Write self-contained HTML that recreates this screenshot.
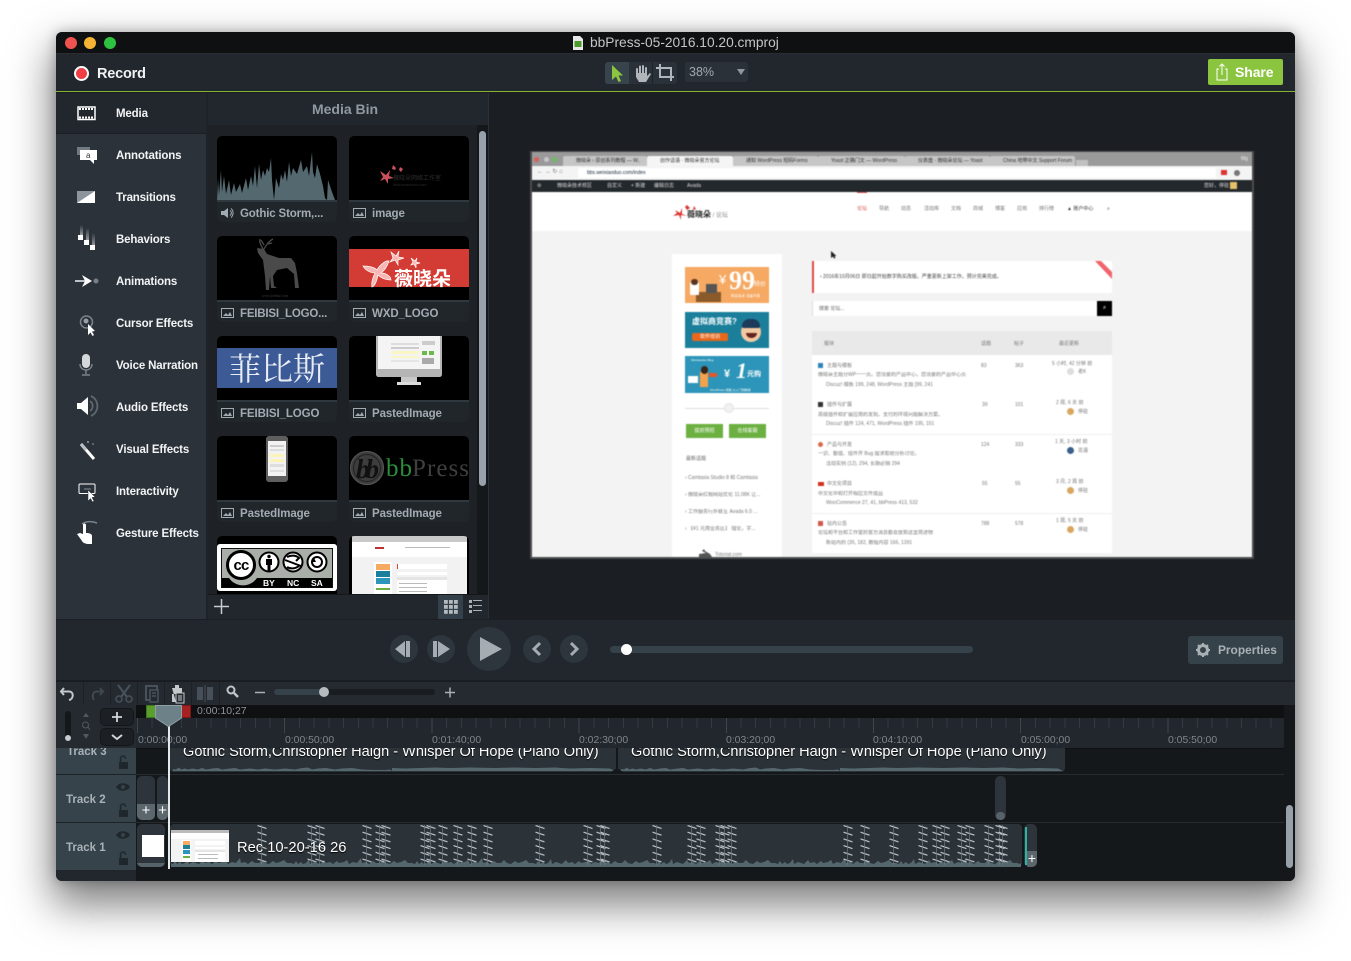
<!DOCTYPE html>
<html lang="en"><head><meta charset="utf-8"><title>bbPress-05-2016.10.20.cmproj</title>
<style>
html,body{margin:0;padding:0;background:#fff;width:1351px;height:961px;overflow:hidden}
body{position:relative;font-family:"Liberation Sans","Noto Sans CJK SC",sans-serif}
.a,.a *{box-sizing:border-box}
.a{position:absolute;white-space:nowrap}
#shadow{left:56px;top:32px;width:1239px;height:849px;border-radius:6px;box-shadow:0 20px 42px 4px rgba(0,0,0,.5),0 0 12px rgba(0,0,0,.25)}
#win{left:0;top:0;width:1351px;height:961px;clip-path:inset(32px 56px 80px 56px round 6px);background:#1b1f24}
.nav{left:116px;color:#f2f4f5;font-size:11.5px;font-weight:bold;line-height:14px;letter-spacing:-.15px}
.card{width:120px;height:86px;background:#21262b;border-radius:5px;overflow:hidden}
.thumb{left:0;top:0;width:120px;height:64px;background:#000}
.strip{left:0;top:64px;width:120px;height:2px;background:#2f383e}
.lab{left:23px;top:71px;color:#a3abb2;font-size:11.5px;font-weight:bold;line-height:14px;letter-spacing:-.1px}
.ico{left:4px;top:71px}
.circ{border-radius:50%;background:#2e363d}
.rl{top:734px;color:#7f858a;font-size:10.4px;line-height:13px}
.tr{left:66px;color:#a9b2b7;font-size:11.5px;font-weight:bold;line-height:14px}
.ln{background:#1d2226}
.clip{background:#2b3238;overflow:hidden}
.cap{color:#fff;font-size:14.55px;line-height:17px;text-shadow:0 1px 1px #000}
/* tiny preview */
#pv{left:530px;top:151px;width:724px;height:408px;overflow:hidden;background:#f3f3f3;filter:blur(.4px);border:2px solid #4b4b4b;border-top-width:1px}
.t{position:absolute;white-space:nowrap;font-size:5px;line-height:6px;color:#777}
.b{position:absolute}
.tab{position:absolute;top:4px;height:11px;background:#c6c6c6;border-radius:2px 2px 0 0;font-size:5px;line-height:11px;color:#333;padding-left:13px;overflow:hidden;white-space:nowrap}
</style></head><body>
<div class="a" id="shadow"></div>
<div class="a" id="win">

<!-- title bar -->
<div class="a" style="left:56px;top:32px;width:1239px;height:22px;background:#0f1012;border-bottom:1px solid #2a2e33"></div>
<div class="a" style="left:65px;top:37px;width:12px;height:12px;border-radius:50%;background:#f0524f"></div>
<div class="a" style="left:84px;top:37px;width:12px;height:12px;border-radius:50%;background:#f5b433"></div>
<div class="a" style="left:104px;top:37px;width:12px;height:12px;border-radius:50%;background:#2dc23f"></div>
<svg class="a" style="left:572px;top:36px" width="12" height="14"><path d="M1 0H8L11 3V14H1Z" fill="#e8e8e8"/><rect x="2.5" y="5" width="7" height="6" fill="#4c9c2c"/></svg>
<div class="a" style="left:590px;top:35px;color:#c3c5c7;font-size:13.75px;line-height:16px">bbPress-05-2016.10.20.cmproj</div>

<!-- top toolbar -->
<div class="a" style="left:56px;top:54px;width:1239px;height:37px;background:#22272e"></div>
<div class="a" style="left:56px;top:91px;width:1239px;height:1px;background:#84b431"></div>
<div class="a" style="left:74px;top:66px;width:15px;height:15px;border-radius:50%;background:#ef3e46;border:2px solid #fff"></div>
<div class="a" style="left:97px;top:65px;color:#f0f2f3;font-size:14.5px;font-weight:bold;line-height:18px;letter-spacing:-.2px">Record</div>
<div class="a" style="left:605px;top:62px;width:72px;height:22px;background:#2a3138;border-radius:3px"></div>
<div class="a" style="left:605px;top:62px;width:24px;height:22px;background:#37444b;border-radius:3px 0 0 3px"></div>
<div class="a" style="left:652px;top:62px;width:1px;height:22px;background:#1e2328"></div>
<svg class="a" style="left:605px;top:62px" width="72" height="22">
<path d="M7 3V18L11 14.5 13.5 20 16 19 13.5 13.5H18Z" fill="#8cc63f"/>
<path d="M32 13V7M35 12V4.500M38 12V4M41 13V6" stroke="#b0b6ba" stroke-width="2" stroke-linecap="round" fill="none"/>
<path d="M31 11H42V14L45 11 46 12 41 20H34L31 15Z" fill="#b0b6ba"/>
<path d="M51 6H66V19M55 2V15H69" stroke="#b0b6ba" stroke-width="2" fill="none"/>
</svg>
<div class="a" style="left:685px;top:62px;width:63px;height:20px;background:#2a3138;border-radius:3px"></div>
<div class="a" style="left:689px;top:65px;color:#a3aaaf;font-size:12.5px;line-height:14px">38%</div>
<svg class="a" style="left:737px;top:69px" width="8" height="6"><path d="M0 0H8L4 6Z" fill="#8f979c"/></svg>
<div class="a" style="left:1208px;top:59px;width:75px;height:26px;background:#8bc53f;border-radius:2px"></div>
<svg class="a" style="left:1214px;top:62px" width="16" height="20"><path d="M5 7H3V18H13V7H11" fill="none" stroke="#fff" stroke-width="1"/><path d="M8 13V2M5.5 4.5L8 2 10.500 4.500" fill="none" stroke="#fff" stroke-width="1"/></svg>
<div class="a" style="left:1235px;top:63px;color:#fff;font-size:14px;font-weight:bold;line-height:18px;letter-spacing:-.1px">Share</div>

<!-- sidebar -->
<div class="a" style="left:56px;top:93px;width:150px;height:526px;background:#2b3239"></div>
<div class="a" style="left:56px;top:93px;width:150px;height:41px;background:#22272e;border-bottom:1px solid #1b1f24"></div>
<div class="a" style="left:206px;top:93px;width:2px;height:526px;background:#1f2328"></div>
<div class="a nav" style="top:107px">Media</div>
<div class="a nav" style="top:149px">Annotations</div>
<div class="a nav" style="top:191px">Transitions</div>
<div class="a nav" style="top:233px">Behaviors</div>
<div class="a nav" style="top:275px">Animations</div>
<div class="a nav" style="top:317px">Cursor Effects</div>
<div class="a nav" style="top:359px">Voice Narration</div>
<div class="a nav" style="top:401px">Audio Effects</div>
<div class="a nav" style="top:443px">Visual Effects</div>
<div class="a nav" style="top:485px">Interactivity</div>
<div class="a nav" style="top:527px">Gesture Effects</div>
<svg class="a" style="left:56px;top:93px" width="150" height="460" fill="#fff">
<defs><linearGradient id="st" x1="0" y1="0" x2="0" y2="1"><stop offset="0" stop-color="#fff" stop-opacity="0"/><stop offset="1" stop-color="#fff" stop-opacity=".5"/></linearGradient></defs>
<!-- media -->
<rect x="22" y="14" width="17" height="12.500" fill="none" stroke="#fff" stroke-width="1.500"/>
<path d="M23 16H38M23 24.500H38" stroke="#fff" stroke-width="2" stroke-dasharray="2 1"/>
<!-- annotations -->
<rect x="21" y="54" width="13" height="8" fill="#6f7a82"/>
<path d="M24 57H41V67H38V71L34 67H24Z"/><text x="30" y="65" font-size="8" fill="#333" font-family="Liberation Sans">a</text>
<!-- transitions -->
<rect x="21" y="98" width="18" height="12" fill="#8c959b"/><path d="M39 98V110H21Z"/>
<!-- behaviors -->
<rect x="24" y="132" width="3" height="10" fill="url(#st)"/><rect x="30" y="135" width="3" height="12" fill="url(#st)"/><rect x="36" y="140" width="3" height="13" fill="url(#st)"/>
<rect x="22" y="142" width="5" height="5"/><rect x="28" y="147" width="5" height="5"/><rect x="34" y="152" width="5" height="5"/>
<!-- animations -->
<path d="M19 188H29" stroke="#fff" stroke-opacity=".7" stroke-width="2"/><path d="M26 182L36 188 26 194 29 188Z"/><circle cx="40" cy="188" r="2.500" fill="#778189"/>
<!-- cursor -->
<circle cx="30.500" cy="229" r="6" fill="none" stroke="#7b858c" stroke-width="1.500"/><circle cx="30" cy="228" r="2.500" fill="#98a0a6"/><path d="M32 231V242L34.500 239.500 36.500 243 38 242 36 238.500 39 238Z"/>
<!-- voice -->
<rect x="26" y="261" width="8" height="14" rx="4" fill="#d5d8da"/><path d="M24 271C24 279 36 279 36 271M30 277V281M26 282H34" fill="none" stroke="#78838a" stroke-width="1.500"/>
<!-- audio -->
<path d="M21 310H25L32 304V322L25 316H21Z" transform="translate(0,0)"/><path d="M34 308A6 6 0 0 1 34 318M35 303A11 11 0 0 1 35 323" fill="none" stroke="#5d686f" stroke-width="1.800"/>
<!-- visual -->
<path d="M25 351L38 366" stroke="#fff" stroke-width="3"/><path d="M25 351L30 357" stroke="#b9bfc3" stroke-width="3"/><circle cx="32" cy="349" r="1" fill="#9aa2a7"/><circle cx="37" cy="351" r=".8" fill="#9aa2a7"/>
<!-- interactivity -->
<rect x="23" y="391" width="16" height="9.500" rx="1" fill="none" stroke="#fff" stroke-width="1"/><path d="M28 396H35" stroke="#8a9399" stroke-width="1"/><path d="M32 397V408L34.500 405.500 36.500 409 38 408 36 404.500 39 404Z" stroke="#2b3239" stroke-width=".5"/>
<!-- gesture -->
<path d="M26 431C30 428 36 428 41 430" fill="none" stroke="#7a848b" stroke-width="1.500"/><path d="M27 432V441L24 440 21 441 26 448C27 450 30 451 33 451H36V443C36 440 31 440 30 440V432C30 430 27 430 27 432Z"/>
</svg>

<!-- media bin -->
<div class="a" style="left:208px;top:93px;width:280px;height:502px;background:#1e2227"></div>
<div class="a" style="left:208px;top:93px;width:280px;height:32px;background:#22272e"></div>
<div class="a" style="left:488px;top:93px;width:1px;height:526px;background:#2b3138"></div>
<div class="a" style="left:208px;top:100px;width:274px;text-align:center;color:#8f999f;font-size:14px;font-weight:bold;line-height:18px">Media Bin</div>
<div class="a" style="left:477px;top:125px;width:11px;height:470px;background:#15181b"></div>
<div class="a" style="left:479px;top:131px;width:7px;height:355px;background:#98a1a9;border-radius:4px"></div>

<!-- card 1 -->
<div class="a card" style="left:217px;top:136px"><div class="a thumb"><svg width="120" height="64"><path d="M0 64L1 42 2 59 4 34 5 56 7 40 9 58 12 44 14 59 17 47 19 56 23 48 25 57 29 42 31 54 34 40 36 50 38 30 40 52 42 28 44 44 46 34 48 40 50 32 52 36 54 22 55 44 57 64 59 42 62 52 64 38 66 44 68 34 70 46 72 26 74 40 76 32 80 38 84 24 86 36 90 30 92 40 95 16 96 36 98 42 100 28 103 38 106 50 108 62 110 64 111 44 115 56 118 64Z" fill="#54686f"/></svg></div><div class="a strip"></div>
<svg class="a ico" width="14" height="12" style="top:71px"><path d="M0 4H3L7 1V11L3 8H0Z" fill="#a3abb2"/><path d="M9 3.500A3 3 0 0 1 9 8.500M10 1.500A6 6 0 0 1 10 10.500" stroke="#a3abb2" fill="none"/></svg>
<div class="a lab" style="letter-spacing:-.15px">Gothic Storm,...</div></div>

<!-- card 2 -->
<div class="a card" style="left:349px;top:136px"><div class="a thumb"><svg width="120" height="64"><g fill="#c9515c"><path d="M31 35L37 39 41 34 40 40 45 42 39 43 39 48 36 43 31 45 34 41Z"/><path d="M44 29L47 32 46 34 43 33Z"/><path d="M51 31L54 33 52 36 50 34Z"/></g><text x="44" y="44" font-size="6" fill="#2e2e2e" font-family="Noto Sans CJK SC">薇晓朵网络工作室</text><text x="44" y="50" font-size="3.500" fill="#2a2a2a" font-family="Liberation Sans">www.weixiaoduo.com</text></svg></div><div class="a strip"></div>
<svg class="a ico" width="13" height="10" style="top:72px"><rect x=".5" y=".5" width="12" height="9" fill="none" stroke="#a3abb2"/><path d="M2 8L5 5 7 7 9 4 11 8Z" fill="#a3abb2"/></svg>
<div class="a lab">image</div></div>

<!-- card 3 -->
<div class="a card" style="left:217px;top:236px"><div class="a thumb"><svg width="120" height="64"><path d="M40 12L47 13 50 18 62 22 74 22 78 27 80 37 82 52 78 52 77 38 70 32 60 34 56 40 57 50 60 52 54 52 53 40 52 54 49 54 48 40 46 24 41 17Z" fill="#4a4a4a"/><path d="M46 13C44 9 42 6 43 3M47 13C50 8 52 5 56 3M47 9L44 4M50 8L55 7" stroke="#4a4a4a" stroke-width="1.300" fill="none"/><text x="45" y="61" font-size="4" font-style="italic" fill="#3d3d3d" font-family="Liberation Serif">www.feibisi.com</text></svg></div><div class="a strip"></div>
<svg class="a ico" width="13" height="10" style="top:72px"><rect x=".5" y=".5" width="12" height="9" fill="none" stroke="#a3abb2"/><path d="M2 8L5 5 7 7 9 4 11 8Z" fill="#a3abb2"/></svg>
<div class="a lab" style="letter-spacing:-.2px">FEIBISI_LOGO...</div></div>

<!-- card 4 -->
<div class="a card" style="left:349px;top:236px"><div class="a thumb"><div class="a" style="left:0;top:13px;width:120px;height:38px;background:#d33c34"></div><svg class="a" style="left:0;top:0" width="120" height="64"><g fill="#f8b7b4" stroke="#fff" stroke-width=".7"><path d="M14 30C22 30 26 32 28 34 30 30 36 24 40 25 38 31 35 35 32 37 38 37 42 41 42 44 36 44 32 42 29 39 28 44 26 50 23 51 22 46 24 41 26 37 21 37 16 34 14 30Z"/><path d="M42 16L47 20 50 15 49 21 55 22 49 24 49 29 46 24 41 26 44 22Z"/><path d="M62 22L66 25 68 22 67 26 71 27 67 28 67 32 65 28 62 29 64 26Z"/></g><text x="45" y="49" font-size="19" font-weight="bold" fill="#fff" font-family="Noto Sans CJK SC">薇晓朵</text></svg></div><div class="a strip"></div>
<svg class="a ico" width="13" height="10" style="top:72px"><rect x=".5" y=".5" width="12" height="9" fill="none" stroke="#a3abb2"/><path d="M2 8L5 5 7 7 9 4 11 8Z" fill="#a3abb2"/></svg>
<div class="a lab">WXD_LOGO</div></div>

<!-- card 5 -->
<div class="a card" style="left:217px;top:336px"><div class="a thumb"><div class="a" style="left:0;top:12px;width:120px;height:40px;background:#3c5a96;color:#e8ecf4;font:32px/39px 'Noto Serif CJK SC',serif;text-align:center">菲比斯</div></div><div class="a strip"></div>
<svg class="a ico" width="13" height="10" style="top:72px"><rect x=".5" y=".5" width="12" height="9" fill="none" stroke="#a3abb2"/><path d="M2 8L5 5 7 7 9 4 11 8Z" fill="#a3abb2"/></svg>
<div class="a lab">FEIBISI_LOGO</div></div>

<!-- card 6 -->
<div class="a card" style="left:349px;top:336px"><div class="a thumb"><svg width="120" height="64"><path d="M27 0H93V38C93 40 92 41 90 41H30C28 41 27 40 27 38Z" fill="#b5b5b5"/><rect x="29" y="0" width="62" height="33" fill="#f4f4f4"/><rect x="42" y="7" width="28" height="2" fill="#ddd"/><rect x="42" y="11" width="28" height="2" fill="#ccc"/><rect x="42" y="15" width="28" height="3" fill="#fbf6c6"/><rect x="42" y="20" width="28" height="2" fill="#fbf6c6"/><rect x="42" y="24" width="28" height="2" fill="#e5e5e5"/><rect x="73" y="5" width="13" height="4" fill="#ccc"/><rect x="73" y="15" width="5" height="4" fill="#6cb84a"/><rect x="80" y="15" width="5" height="4" fill="#6cb84a"/><rect x="73" y="22" width="12" height="6" fill="#aaa"/><rect x="52" y="41" width="16" height="6" fill="#c9c9c9"/><rect x="48" y="46" width="24" height="3" fill="#dcdcdc"/></svg></div><div class="a strip"></div>
<svg class="a ico" width="13" height="10" style="top:72px"><rect x=".5" y=".5" width="12" height="9" fill="none" stroke="#a3abb2"/><path d="M2 8L5 5 7 7 9 4 11 8Z" fill="#a3abb2"/></svg>
<div class="a lab">PastedImage</div></div>

<!-- card 7 -->
<div class="a card" style="left:217px;top:436px"><div class="a thumb"><svg width="120" height="64"><rect x="49" y="0" width="22" height="46" rx="3" fill="#5e5e5e"/><rect x="51" y="5" width="18" height="35" fill="#f2f2f2"/><rect x="53" y="9" width="14" height="2" fill="#ccc"/><rect x="53" y="13" width="14" height="2" fill="#ddd"/><rect x="53" y="18" width="14" height="3" fill="#fbf3b8"/><rect x="53" y="23" width="14" height="3" fill="#fbf3b8"/><rect x="53" y="28" width="14" height="3" fill="#ddd"/><rect x="53" y="34" width="14" height="2" fill="#ddd"/></svg></div><div class="a strip"></div>
<svg class="a ico" width="13" height="10" style="top:72px"><rect x=".5" y=".5" width="12" height="9" fill="none" stroke="#a3abb2"/><path d="M2 8L5 5 7 7 9 4 11 8Z" fill="#a3abb2"/></svg>
<div class="a lab">PastedImage</div></div>

<!-- card 8 -->
<div class="a card" style="left:349px;top:436px"><div class="a thumb"><svg width="120" height="64"><circle cx="18" cy="32" r="16.500" fill="#3d3d3d" stroke="#525252" stroke-width="1.200"/><circle cx="18" cy="32" r="13.500" fill="none" stroke="#222"/><text x="7" y="42" font-size="27" font-style="italic" font-weight="bold" fill="#111" font-family="Liberation Serif" textLength="23">bb</text><text x="37" y="40" font-size="25" fill="#2b8f3a" font-family="Liberation Serif" textLength="26">bb</text><text x="63" y="40" font-size="25" fill="#3f3f3f" font-family="Liberation Serif" textLength="57">Press</text></svg></div><div class="a strip"></div>
<svg class="a ico" width="13" height="10" style="top:72px"><rect x=".5" y=".5" width="12" height="9" fill="none" stroke="#a3abb2"/><path d="M2 8L5 5 7 7 9 4 11 8Z" fill="#a3abb2"/></svg>
<div class="a lab">PastedImage</div></div>

<!-- card 9 -->
<div class="a" style="left:217px;top:536px;width:120px;height:59px;background:#000;border-radius:5px 5px 0 0;overflow:hidden">
<svg width="120" height="59"><rect x="0" y="8" width="120" height="47" rx="3" fill="#fff"/><rect x="4.500" y="12.500" width="111" height="39" fill="#a9aea8" stroke="#111" stroke-width="1"/><rect x="5" y="42" width="110" height="9.500" fill="#000"/><path d="M5 42H40A17 17 0 0 1 12 42Z" fill="#a9aea8"/>
<circle cx="24" cy="29" r="13.500" fill="#fff" stroke="#000" stroke-width="3"/><text x="24" y="34" text-anchor="middle" font-size="15" font-weight="bold" fill="#000" font-family="Liberation Sans" letter-spacing="-.8">cc</text>
<g fill="#fff" stroke="#000" stroke-width="2"><circle cx="52" cy="26" r="9.500"/><circle cx="76" cy="26" r="9.500"/><circle cx="100" cy="26" r="9.500"/></g>
<circle cx="52" cy="20.500" r="1.700" fill="#000"/><path d="M49 23H55V29H53.500V35H50.500V29H49Z" fill="#000"/>
<path d="M70 21C74 19 79 19 82 22L79 25M70 31C73 33 78 33 82 30M68 24L84 30" stroke="#000" stroke-width="2" fill="none"/>
<circle cx="100" cy="26" r="5" fill="none" stroke="#000" stroke-width="2"/><path d="M94 26L97 22 99 26Z" fill="#000"/>
<text x="46" y="50" font-size="8.500" font-weight="bold" fill="#fff" font-family="Liberation Sans">BY</text><text x="70" y="50" font-size="8.500" font-weight="bold" fill="#fff" font-family="Liberation Sans">NC</text><text x="94" y="50" font-size="8.500" font-weight="bold" fill="#fff" font-family="Liberation Sans">SA</text></svg></div>

<!-- card 10 -->
<div class="a" style="left:349px;top:536px;width:120px;height:59px;background:#000;border-radius:5px 5px 0 0;overflow:hidden">
<div class="a" style="left:3px;top:0;width:115px;height:6px;background:#c9c9c9"></div>
<div class="a" style="left:3px;top:6px;width:115px;height:15px;background:#fff"></div>
<div class="a" style="left:3px;top:21px;width:115px;height:38px;background:#f2f2f2"></div>
<div class="a" style="left:26px;top:11px;width:9px;height:2px;background:#b33"></div>
<div class="a" style="left:56px;top:11px;width:45px;height:1px;background:#bbb"></div>
<div class="a" style="left:25px;top:26px;width:18px;height:33px;background:#fff"></div>
<div class="a" style="left:27px;top:28px;width:14px;height:6px;background:#f5a962"></div>
<div class="a" style="left:27px;top:35px;width:14px;height:6px;background:#1b7f9b"></div>
<div class="a" style="left:27px;top:42px;width:14px;height:6px;background:#2d95b9"></div>
<div class="a" style="left:27px;top:52px;width:14px;height:2px;background:#6cb042"></div>
<div class="a" style="left:48px;top:28px;width:50px;height:5px;background:#fff;border-left:1px solid #d44"></div>
<div class="a" style="left:48px;top:36px;width:50px;height:3px;background:#fff"></div>
<div class="a" style="left:48px;top:41px;width:50px;height:3px;background:#e5e5e5"></div>
<div class="a" style="left:48px;top:44px;width:50px;height:15px;background:#fff"></div>
<div class="a" style="left:50px;top:47px;width:28px;height:1px;background:#bbb"></div>
<div class="a" style="left:50px;top:51px;width:28px;height:1px;background:#bbb"></div>
<div class="a" style="left:50px;top:55px;width:28px;height:1px;background:#bbb"></div>
</div>

<!-- bin footer -->
<div class="a" style="left:208px;top:594px;width:280px;height:25px;background:#22272e;border-top:1px solid #15181b"></div>
<svg class="a" style="left:214px;top:599px" width="15" height="15"><path d="M7.500 0V15M0 7.500H15" stroke="#c7cbce" stroke-width="1.500"/></svg>
<div class="a" style="left:438px;top:595px;width:25px;height:24px;background:#35414a"></div>
<svg class="a" style="left:444px;top:600px" width="14" height="14" fill="#b3b9bd"><rect width="3.800" height="3.800"/><rect x="5" width="3.800" height="3.800"/><rect x="10" width="3.800" height="3.800"/><rect y="5" width="3.800" height="3.800"/><rect x="5" y="5" width="3.800" height="3.800"/><rect x="10" y="5" width="3.800" height="3.800"/><rect y="10" width="3.800" height="3.800"/><rect x="5" y="10" width="3.800" height="3.800"/><rect x="10" y="10" width="3.800" height="3.800"/></svg>
<svg class="a" style="left:469px;top:599px" width="14" height="15" fill="#a8aeb3"><rect y="1" width="3" height="3"/><rect x="4" y="1" width="9" height="1"/><rect y="6" width="3" height="3"/><rect x="4" y="6" width="9" height="1"/><rect y="11" width="3" height="3"/><rect x="4" y="11" width="9" height="1"/></svg>

<!-- canvas -->
<div class="a" style="left:489px;top:93px;width:806px;height:526px;background:#1b1f24"></div>
<div class="a" id="pv">
  <div class="b" style="left:0;top:0;width:720px;height:14px;background:#9a9a9a"></div>
  <div class="b" style="left:2px;top:5px;width:5px;height:5px;border-radius:50%;background:#d9605a"></div>
  <div class="b" style="left:12px;top:5px;width:5px;height:5px;border-radius:50%;background:#c7c7c7"></div>
  <div class="b" style="left:20px;top:5px;width:5px;height:5px;border-radius:50%;background:#6bbd5f"></div>
  <div class="tab" style="left:31px;width:84px">微晓朵 › 原创系列教程 — W..</div>
  <div class="tab" style="left:115px;width:86px;background:#f5f5f5">创作话语 · 微晓朵官方论坛</div>
  <div class="tab" style="left:201px;width:85px">通知 WordPress 短码Forms</div>
  <div class="tab" style="left:286px;width:87px">Yoast 正确门文 — WordPress</div>
  <div class="tab" style="left:373px;width:85px">仪表盘 · 微晓朵论坛 — Yoast</div>
  <div class="tab" style="left:458px;width:85px">China 地带中文 Support Forum</div>
  <div class="b" style="left:544px;top:8px;width:12px;height:6px;background:#c0c0c0"></div>
  <div class="t" style="left:709px;top:4px;color:#eee">Mg</div>
  <div class="b" style="left:0;top:14px;width:720px;height:14px;background:#f4f4f4"></div>
  <div class="b" style="left:46px;top:16px;width:638px;height:10px;background:#fff"></div>
  <div class="t" style="left:55px;top:18px;color:#123">bbs.weixiaoduo.com/index</div>
  <div class="t" style="left:5px;top:17px;color:#777;font-size:6px">← → ↻ ⌂</div>
  <div class="b" style="left:689px;top:18px;width:6px;height:5px;background:#d33"></div>
  <div class="b" style="left:702px;top:18px;width:6px;height:6px;border-radius:50%;background:#777"></div>
  <div class="b" style="left:0;top:28px;width:720px;height:12px;background:#23282d"></div>
  <div class="t" style="left:5px;top:31px;color:#ccc">⚙</div>
  <div class="t" style="left:25px;top:31px;color:#ddd">微晓朵技术校区</div>
  <div class="t" style="left:75px;top:31px;color:#ddd">自定义</div>
  <div class="t" style="left:99px;top:31px;color:#ddd">+ 新建</div>
  <div class="t" style="left:122px;top:31px;color:#ddd">编辑日志</div>
  <div class="t" style="left:155px;top:31px;color:#ddd">Avada</div>
  <div class="t" style="left:672px;top:31px;color:#ddd">您好，停驻</div>
  <div class="b" style="left:698px;top:30px;width:7px;height:7px;background:#e8c16a"></div>
  <div class="b" style="left:0;top:40px;width:720px;height:39px;background:#fff"></div>
  <svg class="b" style="left:140px;top:50px" width="60" height="20"><path d="M3 8L8 11 10 6 10 12 15 14 9 13 9 18 7 13 1 14 5 11Z" fill="#d33"/><path d="M15 3L18 6 15 8 13 5Z M22 4L24 7 21 8Z" fill="#d33"/></svg>
  <div class="t" style="left:155px;top:58px;color:#222;font-size:8px;line-height:10px;font-weight:bold">薇晓朵<span style="color:#888;font-size:6px;font-weight:normal"> / 论坛</span></div>
  <div class="t" style="left:325px;top:54px;color:#d9534f">论坛</div>
  <div class="b" style="left:325px;top:40px;width:10px;height:1px;background:#d9534f"></div>
  <div class="t" style="left:347px;top:54px">导航</div>
  <div class="t" style="left:369px;top:54px">动态</div>
  <div class="t" style="left:392px;top:54px">活动库</div>
  <div class="t" style="left:419px;top:54px">文档</div>
  <div class="t" style="left:441px;top:54px">商城</div>
  <div class="t" style="left:463px;top:54px">博客</div>
  <div class="t" style="left:485px;top:54px">应用</div>
  <div class="t" style="left:507px;top:54px">排行榜</div>
  <div class="t" style="left:535px;top:54px;color:#333">▲ 账户中心</div>
  <div class="t" style="left:575px;top:54px;color:#444">⌕</div>
  <svg class="b" style="left:299px;top:99px" width="6" height="8"><path d="M0 0V7L2 5.500 3 7.500 4.500 7 3.500 5H5.500Z" fill="#222"/></svg>
  <div class="b" style="left:140px;top:102px;width:110px;height:303px;background:#fff"></div>
  <div class="b" style="left:153px;top:115px;width:84px;height:36px;background:#f5a962;overflow:hidden">
    <span class="t" style="left:34px;top:6px;color:#fff;font-size:13px;line-height:14px">¥</span>
    <span class="t" style="left:44px;top:0;color:#fff;font:bold 26px/28px 'Liberation Serif',serif">99</span>
    <span class="t" style="left:69px;top:15px;color:#fff;font-size:6px">特价</span>
    <span class="t" style="left:46px;top:27px;color:#fff;font-size:3.500px;line-height:4px">购买技术 流量不限</span>
    <div class="b" style="left:11px;top:25px;width:25px;height:10px;background:#8a5a2b"></div>
    <div class="b" style="left:21px;top:17px;width:11px;height:9px;background:#555"></div>
    <div class="b" style="left:5px;top:13px;width:9px;height:15px;border-radius:4px 4px 0 0;background:#fff"></div>
    <div class="b" style="left:6px;top:12px;width:7px;height:6px;border-radius:4px;background:#5a3520"></div>
  </div>
  <div class="b" style="left:153px;top:160px;width:84px;height:36px;background:#1b7f9b;overflow:hidden">
    <span class="t" style="left:7px;top:5px;color:#fff;font-size:8px;line-height:10px;font-weight:bold">虚拟商竞赛?</span>
    <div class="b" style="left:7px;top:21px;width:36px;height:8px;background:#e8671b;border-radius:2px;color:#fff;font-size:5px;line-height:8px;text-align:center">软件培训</div>
    <div class="b" style="left:56px;top:10px;width:20px;height:20px;border-radius:50%;background:#f2c9a0"></div>
    <div class="b" style="left:57px;top:7px;width:18px;height:9px;border-radius:9px 9px 2px 2px;background:#1c3a5a"></div>
    <div class="b" style="left:61px;top:21px;width:11px;height:5px;border-radius:0 0 5px 5px;background:#63241e"></div>
  </div>
  <div class="b" style="left:153px;top:204px;width:84px;height:37px;background:#2d95b9;overflow:hidden">
    <span class="t" style="left:6px;top:2px;color:#fff;font-size:3px;line-height:4px">Weixiaoduo Blog</span>
    <div class="b" style="left:3px;top:20px;width:10px;height:7px;background:#fff"></div>
    <div class="b" style="left:15px;top:16px;width:8px;height:15px;background:#f5a24c"></div>
    <div class="b" style="left:16px;top:10px;width:7px;height:8px;border-radius:4px;background:#3a2418"></div>
    <div class="b" style="left:24px;top:17px;width:8px;height:4px;background:#e8562a"></div>
    <span class="t" style="left:39px;top:12px;color:#fff;font-size:11px;line-height:12px;font-weight:bold">¥</span>
    <span class="t" style="left:51px;top:4px;color:#fff;font:italic bold 22px/22px 'Liberation Serif',serif">1</span>
    <span class="t" style="left:62px;top:15px;color:#fff;font-size:7px;line-height:8px;font-weight:bold">元购</span>
    <span class="t" style="left:25px;top:32px;color:#fff;font-size:3px;line-height:4px">WordPress 视频 从入门到精通</span>
  </div>
  <div class="b" style="left:153px;top:256px;width:84px;height:1px;background:#ddd"></div>
  <div class="b" style="left:192px;top:251px;width:10px;height:10px;border-radius:50%;background:#f1f1f1;border:1px solid #e2e2e2"></div>
  <div class="b" style="left:154px;top:272px;width:37px;height:14px;background:#6cb042;color:#fff;font-size:5px;line-height:14px;text-align:center">提前预招</div>
  <div class="b" style="left:197px;top:272px;width:37px;height:14px;background:#6cb042;color:#fff;font-size:5px;line-height:14px;text-align:center">在线客服</div>
  <div class="t" style="left:154px;top:304px;color:#666">最新话题</div>
  <div class="t" style="left:153px;top:323px;width:82px;overflow:hidden">› Camtasia Studio 8 和 Camtasia</div>
  <div class="t" style="left:153px;top:340px;width:82px;overflow:hidden">› 微晓朵红帽网站优化 11.08K 让...</div>
  <div class="t" style="left:153px;top:357px;width:82px;overflow:hidden">› 工作服务行外联互 Avada 6.0 ...</div>
  <div class="t" style="left:153px;top:374px;width:82px;overflow:hidden">› 【¥1 元用业务区】 理论，字...</div>
  <svg class="b" style="left:165px;top:396px" width="20" height="9"><path d="M2 9V6L9 5 5 3 7 1 8 3 13 6 15 9Z" fill="#555"/></svg>
  <div class="t" style="left:183px;top:400px">Totorial.com</div>
  <div class="b" style="left:280px;top:109px;width:300px;height:32px;background:#fff;border-left:2px solid #dd4b45"></div>
  <div class="t" style="left:288px;top:122px;color:#444;width:200px">› 2016年10月06日 即日起开始数字购买改版。严重更新上架工作。预计完美完成。</div>
  <svg class="b" style="left:563px;top:109px" width="17" height="18"><path d="M0 0H6L17 11V18Z" fill="#f0646c"/></svg>
  <div class="b" style="left:280px;top:149px;width:285px;height:15px;background:#fff;border-left:1px solid #ddd"></div>
  <div class="t" style="left:287px;top:154px;color:#666">搜索 论坛...</div>
  <div class="b" style="left:565px;top:149px;width:15px;height:15px;background:#000;color:#fff;font-size:6px;line-height:15px;text-align:center">⌕</div>
  <div class="b" style="left:280px;top:179px;width:300px;height:24px;background:#e9e9e9"></div>
  <div class="t" style="left:292px;top:189px">版块</div>
  <div class="t" style="left:449px;top:189px">话题</div>
  <div class="t" style="left:482px;top:189px">帖子</div>
  <div class="t" style="left:527px;top:189px">最近更新</div>
  <div class="b" style="left:280px;top:203px;width:300px;height:198px;background:#fff"></div>
  <div class="b" style="left:280px;top:282px;width:300px;height:1px;background:#eee"></div>
  <div class="b" style="left:280px;top:361px;width:300px;height:1px;background:#eee"></div>
  <div class="b" style="left:286px;top:211px;width:5px;height:5px;background:#2a85b8"></div><div class="t" style="left:295px;top:211px">主题与模板</div>
  <div class="t" style="left:286px;top:220px;width:150px;overflow:hidden">微晓朵主题分WP一一页。您须要的产品中心，您须要的产品中心页</div>
  <div class="t" style="left:294px;top:230px;width:150px;overflow:hidden">Discuz! 模板 199, 248, WordPress 主题 [99, 241</div>
  <div class="t" style="left:449px;top:211px">83</div><div class="t" style="left:483px;top:211px">363</div>
  <div class="t" style="left:520px;top:209px">5 小时, 42 分钟 前</div>
  <div class="b" style="left:535px;top:216px;width:7px;height:7px;border-radius:50%;background:#ddd"></div><div class="t" style="left:546px;top:217px">老K</div>
  <div class="b" style="left:286px;top:250px;width:5px;height:5px;background:#333"></div><div class="t" style="left:295px;top:250px">插件与扩展</div>
  <div class="t" style="left:286px;top:260px;width:150px;overflow:hidden">高级插件和扩展应用的发现。支付的环境问题解决方案。</div>
  <div class="t" style="left:294px;top:269px;width:150px;overflow:hidden">Discuz! 插件 124, 471, WordPress 插件 195, 151</div>
  <div class="t" style="left:450px;top:250px">39</div><div class="t" style="left:483px;top:250px">101</div>
  <div class="t" style="left:524px;top:248px">2 周, 6 天 前</div>
  <div class="b" style="left:535px;top:256px;width:7px;height:7px;border-radius:50%;background:#d9a660"></div><div class="t" style="left:546px;top:257px">停驻</div>
  <div class="b" style="left:286px;top:290px;width:5px;height:5px;border-radius:50%;background:#d9694c"></div><div class="t" style="left:295px;top:290px">产品与开发</div>
  <div class="t" style="left:286px;top:299px;width:150px;overflow:hidden">一识、都值、结件开 Bug 提求帮助分析讨论。</div>
  <div class="t" style="left:294px;top:309px;width:150px;overflow:hidden">活动实例 (12), 294, 长期必销 294</div>
  <div class="t" style="left:449px;top:290px">124</div><div class="t" style="left:483px;top:290px">333</div>
  <div class="t" style="left:523px;top:287px">1 天, 3 小时 前</div>
  <div class="b" style="left:535px;top:295px;width:7px;height:7px;border-radius:50%;background:#3a5f8a"></div><div class="t" style="left:546px;top:296px">花语</div>
  <div class="b" style="left:286px;top:330px;width:6px;height:4px;background:#d32f1f"></div><div class="t" style="left:295px;top:329px">中文化项目</div>
  <div class="t" style="left:286px;top:339px;width:150px;overflow:hidden">中文化中和打开相应文件成品</div>
  <div class="t" style="left:294px;top:348px;width:150px;overflow:hidden">WooCommerce 27, 41, bbPress 413, 532</div>
  <div class="t" style="left:450px;top:329px">55</div><div class="t" style="left:483px;top:329px">55</div>
  <div class="t" style="left:524px;top:327px">3 月, 2 周 前</div>
  <div class="b" style="left:535px;top:335px;width:7px;height:7px;border-radius:50%;background:#d9a660"></div><div class="t" style="left:546px;top:336px">停驻</div>
  <div class="b" style="left:286px;top:369px;width:5px;height:5px;background:#d3564a"></div><div class="t" style="left:295px;top:369px">站内公告</div>
  <div class="t" style="left:286px;top:378px;width:150px;overflow:hidden">论坛和平台和工作室的官方消息都会放到这里简述物</div>
  <div class="t" style="left:294px;top:388px;width:150px;overflow:hidden">新站内的 (35, 182, 教程内容 166, 1391</div>
  <div class="t" style="left:449px;top:369px">788</div><div class="t" style="left:483px;top:369px">578</div>
  <div class="t" style="left:524px;top:366px">1 周, 5 天 前</div>
  <div class="b" style="left:535px;top:374px;width:7px;height:7px;border-radius:50%;background:#d9a660"></div><div class="t" style="left:546px;top:375px">停驻</div>
</div>

<!-- transport -->
<div class="a" style="left:56px;top:619px;width:1239px;height:61px;background:#22272e;border-top:1px solid #1b1f24"></div>
<div class="a circ" style="left:390px;top:635px;width:28px;height:28px"></div>
<div class="a circ" style="left:427px;top:635px;width:28px;height:28px"></div>
<div class="a circ" style="left:467px;top:627px;width:44px;height:44px"></div>
<div class="a circ" style="left:523px;top:635px;width:28px;height:28px"></div>
<div class="a circ" style="left:560px;top:635px;width:28px;height:28px"></div>
<svg class="a" style="left:390px;top:627px" width="200" height="44" fill="#a5adb3">
<path d="M5 22L15 14V30Z"/><rect x="16" y="14" width="4" height="16"/>
<rect x="43" y="14" width="4" height="16"/><path d="M48 14L60 22 48 30Z"/>
<path d="M90 10L112 22 90 34Z"/>
<path d="M150 16L144 22 150 28" fill="none" stroke="#a5adb3" stroke-width="3"/>
<path d="M181 16L187 22 181 28" fill="none" stroke="#a5adb3" stroke-width="3"/>
</svg>
<div class="a" style="left:610px;top:646px;width:363px;height:7px;background:#36424a;border-radius:4px"></div>
<div class="a" style="left:621px;top:644px;width:11px;height:11px;background:#fff;border-radius:50%"></div>
<div class="a" style="left:1188px;top:636px;width:95px;height:28px;background:#36424a;border-radius:3px"></div>
<svg class="a" style="left:1196px;top:643px" width="14" height="14"><circle cx="7" cy="7" r="4.500" fill="none" stroke="#a8b0b6" stroke-width="3"/><path d="M7 0V14M0 7H14M2 2L12 12M12 2L2 12" stroke="#a8b0b6" stroke-width="2" stroke-dasharray="2 10 2 0"/></svg>
<div class="a" style="left:1218px;top:643px;color:#a8b0b6;font-size:11.9px;font-weight:bold;line-height:15px">Properties</div>

<!-- timeline toolbar -->
<div class="a" style="left:56px;top:680px;width:1239px;height:2px;background:#191c20"></div>
<div class="a" style="left:56px;top:682px;width:1239px;height:23px;background:#242a30"></div>
<svg class="a" style="left:56px;top:682px" width="410" height="23">
<g stroke="#1d2126"><path d="M27.500 0V23M54.500 0V23M81.500 0V23M108.500 0V23M135.500 0V23M163.500 0V23"/></g>
<path d="M8 6L5 9.500 8 13M5 9.500H13C18 9.500 18 17 13 18" fill="none" stroke="#c3c8cb" stroke-width="2"/>
<path d="M44 6L47 9.500 44 13M47 9.500H41C36 9.500 36 15 38 18" fill="none" stroke="#40484e" stroke-width="2"/>
<path d="M62 3L71 15M74 3L65 15" stroke="#49525a" stroke-width="2"/><circle cx="63" cy="17" r="3" fill="none" stroke="#49525a" stroke-width="1.500"/><circle cx="73" cy="17" r="3" fill="none" stroke="#49525a" stroke-width="1.500"/>
<path d="M90 4H101V18H90Z" fill="none" stroke="#49525a" stroke-width="2"/><path d="M94 8H102V20H94Z M96 11H100M96 14H100" fill="#242a30" stroke="#49525a" stroke-width="1.500"/>
<path d="M116 6H119V3H123V6H126V12H116Z M116 6V20H120" fill="#c3c8cb"/><rect x="120" y="11" width="8" height="10" fill="#242a30" stroke="#c3c8cb" stroke-width="1"/><path d="M122 14H126M122 16H126M122 18H126" stroke="#c3c8cb"/>
<rect x="141" y="5" width="6" height="13" fill="#475058"/><rect x="151" y="5" width="6" height="13" fill="#475058"/><path d="M149 3V20" stroke="#475058"/>
<circle cx="175" cy="8" r="3.500" fill="none" stroke="#bfc4c8" stroke-width="2"/><path d="M178 11L182 15" stroke="#bfc4c8" stroke-width="2.500"/>
<path d="M199 10.500H209" stroke="#a8aeb3" stroke-width="1.500"/>
<rect x="218" y="7" width="161" height="6" rx="3" fill="#191c20"/><rect x="218" y="7" width="50" height="6" rx="3" fill="#36424a"/>
<circle cx="268" cy="10" r="5" fill="#b5bbbf"/>
<path d="M389 10.500H399M394 5.500V15.500" stroke="#a8aeb3" stroke-width="1.500"/>
</svg>

<!-- ruler -->
<div class="a" style="left:56px;top:705px;width:80px;height:43px;background:#242a30"></div>
<div class="a" style="left:136px;top:705px;width:1148px;height:13px;background:#0e1012"></div>
<div class="a" style="left:136px;top:718px;width:1148px;height:30px;background:#22272e"></div>
<div class="a" style="left:137px;top:718px;width:1147px;height:10px;background-image:repeating-linear-gradient(90deg,#333a41 0,#333a41 1px,transparent 1px,transparent 14.720px)"></div>
<div class="a" style="left:137px;top:718px;width:1147px;height:15px;background-image:repeating-linear-gradient(90deg,#3e474e 0,#3e474e 1px,transparent 1px,transparent 147.200px)"></div>
<div class="a" style="left:65px;top:711px;width:6px;height:30px;background:#15181b;border-radius:3px"></div>
<div class="a" style="left:65px;top:735px;width:6px;height:6px;background:#c7cbce;border-radius:50%"></div>
<svg class="a" style="left:80px;top:713px" width="12" height="26" fill="#50595f"><path d="M6 0L9 4H3ZM6 26L9 21H3Z"/><circle cx="5.500" cy="12" r="3" fill="none" stroke="#50595f"/><path d="M8 14L10 17" stroke="#50595f"/></svg>
<div class="a" style="left:100px;top:708px;width:34px;height:18px;background:#1c2025;border-radius:5px;border:1px solid #14171a"></div>
<div class="a" style="left:100px;top:728px;width:34px;height:18px;background:#1c2025;border-radius:5px;border:1px solid #14171a"></div>
<svg class="a" style="left:100px;top:708px" width="34" height="38"><path d="M12 9H22M17 4V14" stroke="#d3d6d8" stroke-width="1.800"/><path d="M12 27L17 31 22 27" fill="none" stroke="#d3d6d8" stroke-width="2"/></svg>
<div class="a rl" style="left:138px">0:00:00;00</div>
<div class="a rl" style="left:285px">0:00:50;00</div>
<div class="a rl" style="left:432px">0:01:40;00</div>
<div class="a rl" style="left:579px">0:02:30;00</div>
<div class="a rl" style="left:726px">0:03:20;00</div>
<div class="a rl" style="left:873px">0:04:10;00</div>
<div class="a rl" style="left:1021px">0:05:00;00</div>
<div class="a rl" style="left:1168px">0:05:50;00</div>
<div class="a" style="left:197px;top:705px;color:#8d9397;font-size:10.500px;line-height:13px">0:00:10;27</div>

<!-- tracks bg -->
<div class="a" style="left:136px;top:748px;width:1159px;height:133px;background:#15181b"></div>
<div class="a" style="left:136px;top:748px;width:1148px;height:1px;background:#0f1113"></div>
<div class="a" style="left:56px;top:748px;width:80px;height:122px;background:#36434b"></div>
<div class="a" style="left:56px;top:870px;width:80px;height:11px;background:#22272e"></div>
<div class="a ln" style="left:56px;top:774px;width:80px;height:1px"></div>
<div class="a ln" style="left:56px;top:822px;width:80px;height:1px"></div>
<div class="a" style="left:136px;top:774px;width:1148px;height:1px;background:#262b30"></div>
<div class="a" style="left:136px;top:822px;width:1148px;height:1px;background:#262b30"></div>
<div class="a" style="left:1284px;top:705px;width:11px;height:176px;background:#15181b"></div>
<div class="a" style="left:1286px;top:805px;width:7px;height:63px;background:#98a1a9;border-radius:4px"></div>

<!-- track 3 clip -->
<div class="a" style="left:56px;top:748px;width:80px;height:26px;overflow:hidden"><div class="a tr" style="left:11px;top:-3px">Track 3</div></div>
<svg class="a" style="left:117px;top:755px" width="13" height="14" fill="#1f272c"><path d="M2 7H11V14H2Z"/><path d="M3.500 7V4C3.500 0 8.500 0 8.500 4" fill="none" stroke="#1f272c" stroke-width="1.500"/></svg>
<div class="a clip" style="left:170px;top:748px;width:446px;height:24px;border-radius:0 0 0 3px"><div class="a cap" style="left:13px;top:-4px">Gothic Storm,Christopher Haigh - Whisper Of Hope (Piano Only)</div>
<svg class="a" style="left:0;top:0" width="446" height="24"><path d="M3 23V21L6 21.500 9 19.500 11 21.500 15 20.500 18 21.500 22 20.500 28 21.500 32 20 36 21.500 42 20.500 48 20 52 21.500 60 20.500 65 20 70 21.500 80 20.500 88 21.500 95 20.500 105 21.500 115 20.500 125 21.500 132 20 138 19.500 142 21.500 148 20.500 156 20 165 21.500 172 20.500 182 20 192 21.500 205 22 215 22 220 21.500 222 23V20L235 20.500 250 20 265 19.500 280 20 300 19.500 325 20 345 19.500 365 20 385 19.500 400 20.500 420 20 440 20.500 445 23Z" fill="#55686e"/></svg></div>
<div class="a clip" style="left:618px;top:748px;width:447px;height:24px;border-radius:0 0 4px 0"><div class="a cap" style="left:13px;top:-4px">Gothic Storm,Christopher Haigh - Whisper Of Hope (Piano Only)</div>
<svg class="a" style="left:0;top:0" width="447" height="24"><path d="M3 23V21L6 21.500 9 19.500 11 21.500 15 20.500 18 21.500 22 20.500 28 21.500 32 20 36 21.500 42 20.500 48 20 52 21.500 60 20.500 65 20 70 21.500 80 20.500 88 21.500 95 20.500 105 21.500 115 20.500 125 21.500 132 20 138 19.500 142 21.500 148 20.500 156 20 165 21.500 172 20.500 182 20 192 21.500 205 22 215 22 220 21.500 222 23V20L235 20.500 250 20 265 19.500 280 20 300 19.500 325 20 345 19.500 365 20 385 19.500 400 20.500 420 20 440 20.500 445 23Z" fill="#55686e"/></svg></div>
<svg class="a" style="left:611px;top:768px" width="12" height="4"><path d="M0 4L6 0 12 4Z" fill="#15181b"/></svg>

<!-- track 2 -->
<div class="a tr" style="top:793px">Track 2</div>
<svg class="a" style="left:116px;top:782px" width="14" height="10"><path d="M0 5C3 0 11 0 14 5 11 10 3 10 0 5Z" fill="#1f272c"/><circle cx="7" cy="5" r="2" fill="#36434b"/></svg>
<svg class="a" style="left:117px;top:803px" width="13" height="14" fill="#1f272c"><path d="M2 7H11V14H2Z"/><path d="M3.500 7V4C3.500 0 8.500 0 8.500 4" fill="none" stroke="#1f272c" stroke-width="1.500"/></svg>
<div class="a" style="left:137px;top:776px;width:18px;height:44px;background:#2d343b;border-radius:5px;overflow:hidden"><div class="a" style="left:0;top:28px;width:18px;height:16px;background:#5b666d;color:#fff;font-size:15px;line-height:14px;text-align:center">+</div></div>
<div class="a" style="left:157px;top:776px;width:11px;height:44px;background:#2d343b;border-radius:5px;overflow:hidden"><div class="a" style="left:0;top:28px;width:11px;height:16px;background:#5b666d;color:#fff;font-size:15px;line-height:14px;text-align:center">+</div></div>
<div class="a" style="left:995px;top:776px;width:11px;height:44px;background:#2d343b;border-radius:5px;overflow:hidden"><div class="a" style="left:1px;top:36px;width:9px;height:8px;background:#56636b;border-radius:4px"></div></div>

<!-- track 1 -->
<div class="a tr" style="top:841px">Track 1</div>
<svg class="a" style="left:116px;top:830px" width="14" height="10"><path d="M0 5C3 0 11 0 14 5 11 10 3 10 0 5Z" fill="#1f272c"/><circle cx="7" cy="5" r="2" fill="#36434b"/></svg>
<svg class="a" style="left:117px;top:851px" width="13" height="14" fill="#1f272c"><path d="M2 7H11V14H2Z"/><path d="M3.500 7V4C3.500 0 8.500 0 8.500 4" fill="none" stroke="#1f272c" stroke-width="1.500"/></svg>
<div class="a" style="left:137px;top:824px;width:28px;height:43px;background:#2d343b;border-radius:5px;overflow:hidden"><div class="a" style="left:0;top:39px;width:28px;height:4px;background:#56636b"></div></div>
<div class="a" style="left:142px;top:835px;width:22px;height:22px;background:#fff"></div>
<div class="a clip" style="left:170px;top:824px;width:852px;height:43px;border-radius:4px"></div>
<svg class="a" style="left:170px;top:824px" width="866" height="44">
<defs>
<pattern id="zz" patternUnits="userSpaceOnUse" width="10" height="6.700"><path d="M0.500 1.500L9.500 4.500" stroke="#c4ccd0" stroke-width="1.100"/><path d="M4.500 0V6.700" stroke="#6d7b81" stroke-width=".7"/></pattern>
<pattern id="wv" patternUnits="userSpaceOnUse" width="121" height="14" y="30"><path d="M0 14V9L3 10 5 7 7 10 10 8 12 10 15 9 18 5 19 10 23 8 26 9 29 10 33 6 35 9 39 8 42 10 46 7 48 9 53 8 56 6 58 10 62 8 66 9 70 4 71 9 75 8 78 10 82 7 85 9 89 9 92 6 95 9 99 10 103 7 106 9 110 8 114 6 117 9 121 9V14Z" fill="#54676d"/></pattern>
<g id="j"><rect x="0" y="1" width="10" height="40" fill="url(#zz)"/></g>
</defs>
<rect x="1" y="30" width="850" height="13" fill="url(#wv)"/>
<g transform="translate(2,0)">
<use href="#j" x="85"/><use href="#j" x="135"/><use href="#j" x="143"/><use href="#j" x="190"/><use href="#j" x="203"/><use href="#j" x="209"/>
<use href="#j" x="248"/><use href="#j" x="254"/><use href="#j" x="266"/><use href="#j" x="281"/><use href="#j" x="295"/><use href="#j" x="311"/>
<use href="#j" x="363"/><use href="#j" x="411"/><use href="#j" x="424"/><use href="#j" x="428"/><use href="#j" x="480"/><use href="#j" x="515"/><use href="#j" x="524"/>
<use href="#j" x="543"/><use href="#j" x="548"/><use href="#j" x="555"/><use href="#j" x="671"/><use href="#j" x="688"/><use href="#j" x="717"/><use href="#j" x="746"/><use href="#j" x="760"/><use href="#j" x="768"/><use href="#j" x="785"/><use href="#j" x="793"/><use href="#j" x="812"/><use href="#j" x="823"/><use href="#j" x="826"/>
</g>
</svg>
<!-- clip thumb -->
<div class="a" style="left:171px;top:830px;width:58px;height:32px;background:#f3f3f3;overflow:hidden">
<div class="a" style="left:0;top:0;width:58px;height:5px;background:#bbb"></div><div class="a" style="left:0;top:3px;width:58px;height:6px;background:#fff"></div>
<div class="a" style="left:11px;top:10px;width:9px;height:22px;background:#fff"></div>
<div class="a" style="left:12px;top:11px;width:7px;height:4px;background:#f5a962"></div><div class="a" style="left:12px;top:15px;width:7px;height:4px;background:#1b7f9b"></div><div class="a" style="left:12px;top:20px;width:7px;height:4px;background:#2d95b9"></div><div class="a" style="left:12px;top:26px;width:7px;height:2px;background:#6cb042"></div>
<div class="a" style="left:24px;top:11px;width:30px;height:4px;background:#fff"></div><div class="a" style="left:24px;top:17px;width:30px;height:2px;background:#fff"></div><div class="a" style="left:24px;top:20px;width:30px;height:2px;background:#e5e5e5"></div><div class="a" style="left:24px;top:22px;width:30px;height:10px;background:#fff"></div>
<div class="a" style="left:27px;top:24px;width:20px;height:1px;background:#bbb"></div><div class="a" style="left:27px;top:28px;width:20px;height:1px;background:#bbb"></div>
</div>
<div class="a cap" style="left:237px;top:839px;font-size:14.7px;line-height:18px">Rec 10-20-16 26</div>
<div class="a" style="left:1024px;top:824px;width:13px;height:43px;background:#2d343b;border-radius:5px;overflow:hidden"><div class="a" style="left:1px;top:3px;width:2px;height:38px;background:#2bb5a0"></div><div class="a" style="left:3px;top:27px;width:10px;height:16px;background:#5b666d;color:#fff;font-size:14px;line-height:15px;text-align:center">+</div></div>

<!-- playhead -->
<div class="a" style="left:168px;top:726px;width:1.500px;height:143px;background:#e6e9ea"></div>
<div class="a" style="left:146px;top:705px;width:10px;height:13px;background:#5a9e2b;border:1px solid #3e7a1c"></div>
<div class="a" style="left:181px;top:705px;width:10px;height:13px;background:#a62222;border:1px solid #7d1717"></div>
<svg class="a" style="left:155px;top:705px" width="27" height="22"><path d="M.5 .5H26.500V13L13.500 21.500 .5 13Z" fill="#6c8188" stroke="#8ea0a6"/></svg>

</div>
</body></html>
